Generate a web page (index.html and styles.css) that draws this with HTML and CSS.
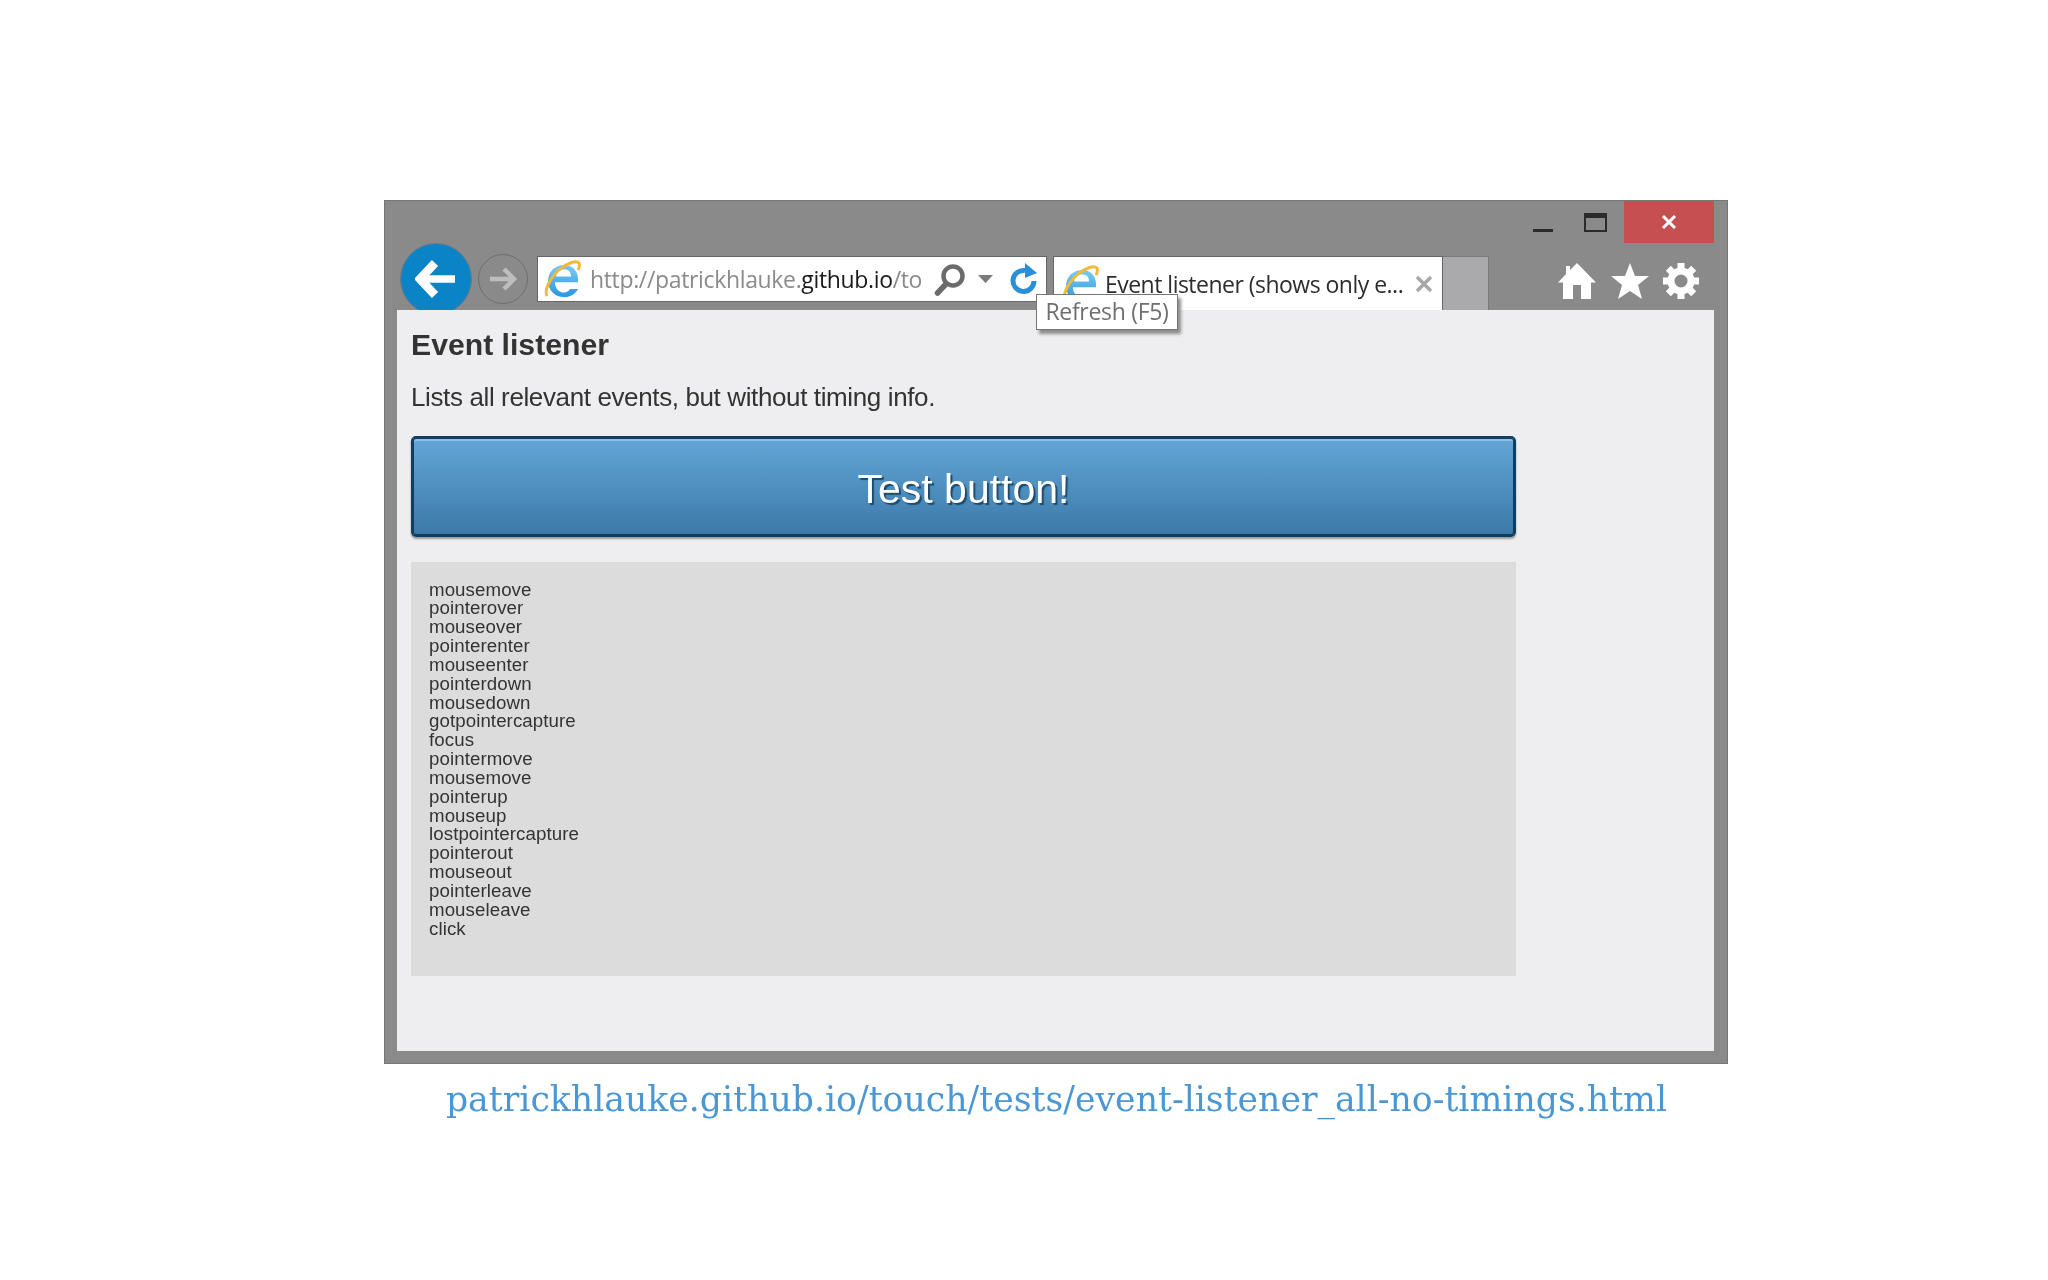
FILE: index.html
```html
<!DOCTYPE html>
<html lang="en">
<head>
<meta charset="utf-8">
<title>Event listener</title>
<link rel="stylesheet" href="styles.css">
</head>
<body>
<main class="slide">
  <div class="window">
    <div class="chrome">
      <div class="controls">
        <span class="min"></span>
        <span class="max"></span>
        <span class="close">
          <svg width="16" height="16" viewBox="0 0 16 16"><path d="M2 2 14 14M14 2 2 14" stroke="#fff" stroke-width="3"/></svg>
        </span>
      </div>
      <div class="toolbar">
        <span class="back">
          <svg width="42" height="38" viewBox="0 0 42 38"><path d="M20 3 5 19l15 16" fill="none" stroke="#fff" stroke-width="8.500"/><path d="M7 19h33" stroke="#fff" stroke-width="7.500"/></svg>
        </span>
        <span class="forward">
          <svg width="30" height="26" viewBox="0 0 30 26"><path d="M16 3l10 10-10 10" fill="none" stroke="#bdbdbd" stroke-width="4.500"/><path d="M25 13H2" stroke="#bdbdbd" stroke-width="4.500"/></svg>
        </span>
        <div class="address">
          <svg class="ie" width="38" height="38" viewBox="0 0 38 38"><use href="#ie-logo"/></svg>
          <span class="url">http://patrickhlauke.<b>github.io</b>/touch/tests/event-listener_all-no-timings.html</span>
          <svg class="search" width="32" height="34" viewBox="0 0 32 34"><circle cx="19" cy="14" r="9.500" fill="none" stroke="#6c6c6c" stroke-width="4.500"/><path d="M12 22 3.500 31" stroke="#6c6c6c" stroke-width="5.500" stroke-linecap="round"/></svg>
          <svg class="caret" width="15" height="8" viewBox="0 0 15 8"><path d="M0 0h15L7.500 8z" fill="#7b7b7b"/></svg>
          <svg class="refresh" width="28" height="34" viewBox="0 0 28 34"><path d="M15 8.500A10.500 10.500 0 1 0 24 19" fill="none" stroke="#2a8fd6" stroke-width="5"/><path d="M15 1l12 10-12 5z" fill="#2a8fd6"/></svg>
        </div>
        <div class="tab">
          <svg class="ie" width="38" height="38" viewBox="0 0 38 38"><use href="#ie-logo"/></svg>
          <span class="tab-title">Event listener (shows only e...</span>
          <svg class="tab-x" width="18" height="18" viewBox="0 0 18 18"><path d="M2 2 16 16M16 2 2 16" stroke="#a8a8a8" stroke-width="3.500"/></svg>
        </div>
        <span class="newtab"></span>
        <div class="tools">
          <svg width="40" height="38" viewBox="0 0 40 38"><path d="M20 1 13 8V4H9v8L1 20.500h5V37h10V23h8v14h10V20.500h5z" fill="#fff"/></svg>
          <svg width="38" height="36" viewBox="0 0 38 36"><path d="M19 0l5 13h14L27 22l4 14-12-8-12 8 4-14L0 13h14z" fill="#fff"/></svg>
          <svg width="38" height="38" viewBox="0 0 38 38"><circle cx="19" cy="19" r="10" fill="none" stroke="#fff" stroke-width="7"/><path d="M19 1v8M19 29v8M1 19h8M29 19h8M6.300 6.300l5.700 5.700M26 26l5.700 5.700M31.700 6.300 26 12M12 26l-5.700 5.700" stroke="#fff" stroke-width="7"/></svg>
        </div>
      </div>
    </div>
    <div class="viewport">
      <h1 class="title">Event listener</h1>
      <p class="lead">Lists all relevant events, but without timing info.</p>
      <div class="test-btn">Test button!</div>
      <pre class="log">mousemove
pointerover
mouseover
pointerenter
mouseenter
pointerdown
mousedown
gotpointercapture
focus
pointermove
mousemove
pointerup
mouseup
lostpointercapture
pointerout
mouseout
pointerleave
mouseleave
click</pre>
    </div>
    <div class="tooltip">Refresh (F5)</div>
  </div>
  <p class="caption">patrickhlauke.github.io/touch/tests/event-listener_all-no-timings.html</p>
</main>
<svg class="defs" width="0" height="0">
  <defs>
    <linearGradient id="ie-blue" x1="0" y1="0" x2="0" y2="1">
      <stop offset="0" stop-color="#7ccbf2"/>
      <stop offset="1" stop-color="#2a97de"/>
    </linearGradient>
    <g id="ie-logo">
      <path transform="translate(-2.850 -3.150) scale(1.150)" d="M9 22h23c1-9-4-15-12-15S6 13 6 21s6 14 14 14c6 0 10-3 12-7h-7c-1 2-3 3-5 3-5 0-8-4-8-9zM13 17c0-4 3-6 7-6s6 2 6 6z" fill="url(#ie-blue)" fill-rule="evenodd"/>
      <path d="M3 36C0 30 6 18 15 10 23 3 32 0 35 3c1 2 0 5-1 7" fill="none" stroke="#f2b93a" stroke-width="3"/>
    </g>
  </defs>
</svg>
</body>
</html>
```

FILE: styles.css
```css
* { box-sizing: border-box; }

html, body { margin: 0; padding: 0; background: #fff; }

.slide {
  width: 2048px;
  height: 1280px;
  padding: 200px 0 0 384px;
  filter: blur(0.4px);
}

.window {
  position: relative;
  width: 1344px;
  height: 864px;
  padding: 0 13px 12px 12px;
  background: #8a8a8a;
  border: 1px solid #767676;
}

.chrome {
  height: 109px;
  overflow: hidden;
}

.controls {
  display: flex;
  justify-content: flex-end;
  height: 43px;
}

.min {
  width: 20px;
  height: 3px;
  margin: 28px 31px 0 0;
  background: #2b2b2b;
}

.max {
  width: 23px;
  height: 19px;
  margin: 12px 17px 0 0;
  border: 2px solid #2b2b2b;
  border-top-width: 5px;
}

.close {
  display: flex;
  align-items: center;
  justify-content: center;
  width: 90px;
  height: 42px;
  background: #c64f51;
}

.toolbar {
  display: flex;
  align-items: flex-start;
  height: 54px;
  margin-top: 12px;
  padding-left: 3px;
}

.back {
  display: flex;
  align-items: center;
  justify-content: center;
  flex: none;
  width: 72px;
  height: 72px;
  margin-top: -13px;
  background: #0a84c6;
  border: 1px solid #6f7a80;
  border-radius: 50%;
}

.forward {
  display: flex;
  align-items: center;
  justify-content: center;
  flex: none;
  width: 50px;
  height: 50px;
  margin: -2px 0 0 6px;
  border: 1.500px solid #6e6e6e;
  border-radius: 50%;
}

.address {
  display: flex;
  align-items: center;
  flex: none;
  width: 510px;
  height: 46px;
  margin-left: 9px;
  padding-left: 6px;
  background: #fff;
  border: 1px solid #666;
  font: 23px "Open Sans", "Noto Sans", sans-serif;
  color: #8b8b8b;
}

.ie { flex: none; }

.url {
  width: 332px;
  margin-left: 8px;
  overflow: hidden;
  white-space: nowrap;
  letter-spacing: -0.35px;
}

.url b { font-weight: 400; color: #1a1a1a; }

.search { margin-left: 12px; flex: none; }
.caret { margin-left: 12px; flex: none; }
.refresh { margin-left: 17px; flex: none; }

.tab {
  display: flex;
  align-items: center;
  flex: none;
  width: 390px;
  height: 54px;
  margin-left: 6px;
  padding-left: 8px;
  background: #fff;
  border: 1px solid #666;
  border-bottom: 0;
  font: 23px "Open Sans", "Noto Sans", sans-serif;
  color: #2d2d2d;
}

.tab-title {
  margin-left: 5px;
  width: 310px;
  white-space: nowrap;
  letter-spacing: -0.52px;
}

.tab-x { flex: none; }

.newtab {
  flex: none;
  width: 46px;
  height: 54px;
  background: #aaaaac;
  border: 1px solid #7a7a7a;
  border-left: 0;
  border-bottom: 0;
}

.tools {
  display: flex;
  align-items: center;
  gap: 13.500px;
  margin-left: 68px;
  height: 50px;
}

.viewport {
  height: 741px;
  padding: 0 14px;
  background: #eeeef0;
  font-family: "Liberation Sans", Arial, sans-serif;
  color: #333;
}

.title {
  margin: 0;
  padding-top: 17px;
  font-size: 30.200px;
  line-height: 36px;
  font-weight: 700;
}

.lead {
  margin: 18px 0 0;
  font-size: 26px;
  line-height: 32px;
  letter-spacing: -0.38px;
}

.test-btn {
  width: 1105px;
  height: 101px;
  margin-top: 23px;
  padding-top: 3px;
  border: 3px solid #0f3f60;
  border-top-color: #123f62;
  border-bottom-color: #0b3f60;
  border-radius: 5px;
  background: linear-gradient(#62a6d7, #3c79a8);
  box-shadow: inset 0 2px 0 #8fc0e2, 0 2px 2px #999;
  color: #fff;
  font-size: 41px;
  line-height: 94px;
  text-align: center;
  text-shadow: 2px 2px 1px #1d4a6c;
}

.log {
  width: 1105px;
  height: 414px;
  margin: 25px 0 0;
  padding: 18.500px 18px;
  background: #dcdcdc;
  font-family: "Liberation Sans", Arial, sans-serif;
  font-size: 18.700px;
  line-height: 18.850px;
  letter-spacing: 0.08px;
  color: #333;
}

.tooltip {
  position: absolute;
  left: 651px;
  top: 93px;
  width: 142px;
  height: 36px;
  background: #fff;
  border: 1px solid #767676;
  box-shadow: 3px 4px 3px #8d8d8d;
  font: 23px/32px "Open Sans", "Noto Sans", sans-serif;
  color: #6f6f6f;
  text-align: center;
  white-space: nowrap;
  letter-spacing: -0.3px;
}

.caption {
  margin: 12px 0 0;
  width: 1345px;
  font-family: "DejaVu Serif", serif;
  font-size: 34.700px;
  line-height: 46px;
  color: #4a97d4;
  text-align: center;
  white-space: nowrap;
}

.defs { position: absolute; }
```
